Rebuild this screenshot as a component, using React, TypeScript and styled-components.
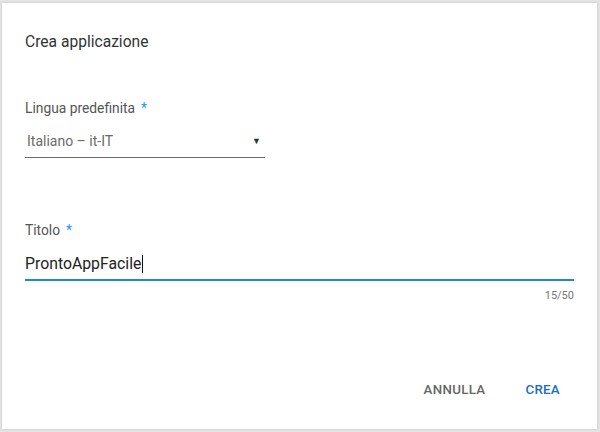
import React from 'react';
import styled, { createGlobalStyle } from 'styled-components';

const GlobalStyle = createGlobalStyle`
  html, body {
    margin: 0;
    padding: 0;
    background: #e4e4e4;
    font-family: Roboto, "Noto Sans", Arial, sans-serif;
  }
`;

const Page = styled.div`
  width: 600px;
  height: 432px;
  padding: 3px 3px 3px 2px;
  box-sizing: border-box;
  overflow: hidden;
`;

const Dialog = styled.div`
  height: 100%;
  background: #fff;
  box-shadow: 0 0 2px rgba(0, 0, 0, 0.18);
  padding: 29px 23px 22px 23px;
  box-sizing: border-box;
  display: flex;
  flex-direction: column;
`;

const Title = styled.h2`
  margin: 0;
  font-size: 15.6px;
  line-height: 20px;
  font-weight: 400;
  color: #333;
`;

const Field = styled.div<{ $gap: number; $width?: number }>`
  margin-top: ${(p) => p.$gap}px;
  width: ${(p) => (p.$width ? `${p.$width}px` : 'auto')};
  display: flex;
  flex-direction: column;
`;

const Label = styled.label`
  font-size: 13.8px;
  line-height: 18px;
  color: #555;
`;

const Required = styled.span`
  color: #2196f3;
  margin-left: 6px;
`;

const SelectBox = styled.div`
  margin-top: 14px;
  padding: 0 4px 6px 2px;
  display: flex;
  align-items: center;
  justify-content: space-between;
  border-bottom: 1px solid #6b6b6b;
  font-size: 14px;
  line-height: 20px;
  color: #6a6a6a;
`;

const Caret = styled.span`
  font-size: 9px;
  color: #333;
`;

const InputBox = styled.div`
  margin-top: 14px;
  padding-bottom: 4px;
  border-bottom: 2px solid #1e88d8;
  font-size: 15.8px;
  line-height: 22px;
  color: #222;
  display: flex;
  align-items: center;
`;

const TextCursor = styled.span`
  display: inline-block;
  width: 1px;
  height: 18px;
  background: #111;
  margin-left: 1px;
`;

const Counter = styled.div`
  margin-top: 8px;
  align-self: flex-end;
  font-size: 11px;
  line-height: 14px;
  color: #777;
`;

const Actions = styled.div`
  margin-top: auto;
  margin-right: -2px;
  display: flex;
  justify-content: flex-end;
  gap: 8px;
`;

const Button = styled.button<{ $primary?: boolean }>`
  border: none;
  background: none;
  height: 36px;
  padding: 0 16px;
  font-family: inherit;
  font-size: 13.3px;
  font-weight: 500;
  letter-spacing: 0.3px;
  text-transform: uppercase;
  color: ${(p) => (p.$primary ? '#1b6fbf' : '#666')};
  cursor: pointer;
`;

const App: React.FC = () => {
  return (
    <Page>
      <GlobalStyle />
      <Dialog>
        <Title>Crea applicazione</Title>

        <Field $gap={47} $width={240}>
          <Label>
            Lingua predefinita<Required>*</Required>
          </Label>
          <SelectBox>
            <span>Italiano – it-IT</span>
            <Caret>▼</Caret>
          </SelectBox>
        </Field>

        <Field $gap={63}>
          <Label>
            Titolo<Required>*</Required>
          </Label>
          <InputBox>
            ProntoAppFacile
            <TextCursor />
          </InputBox>
          <Counter>15/50</Counter>
        </Field>

        <Actions>
          <Button>Annulla</Button>
          <Button $primary>Crea</Button>
        </Actions>
      </Dialog>
    </Page>
  );
};

export default App;
